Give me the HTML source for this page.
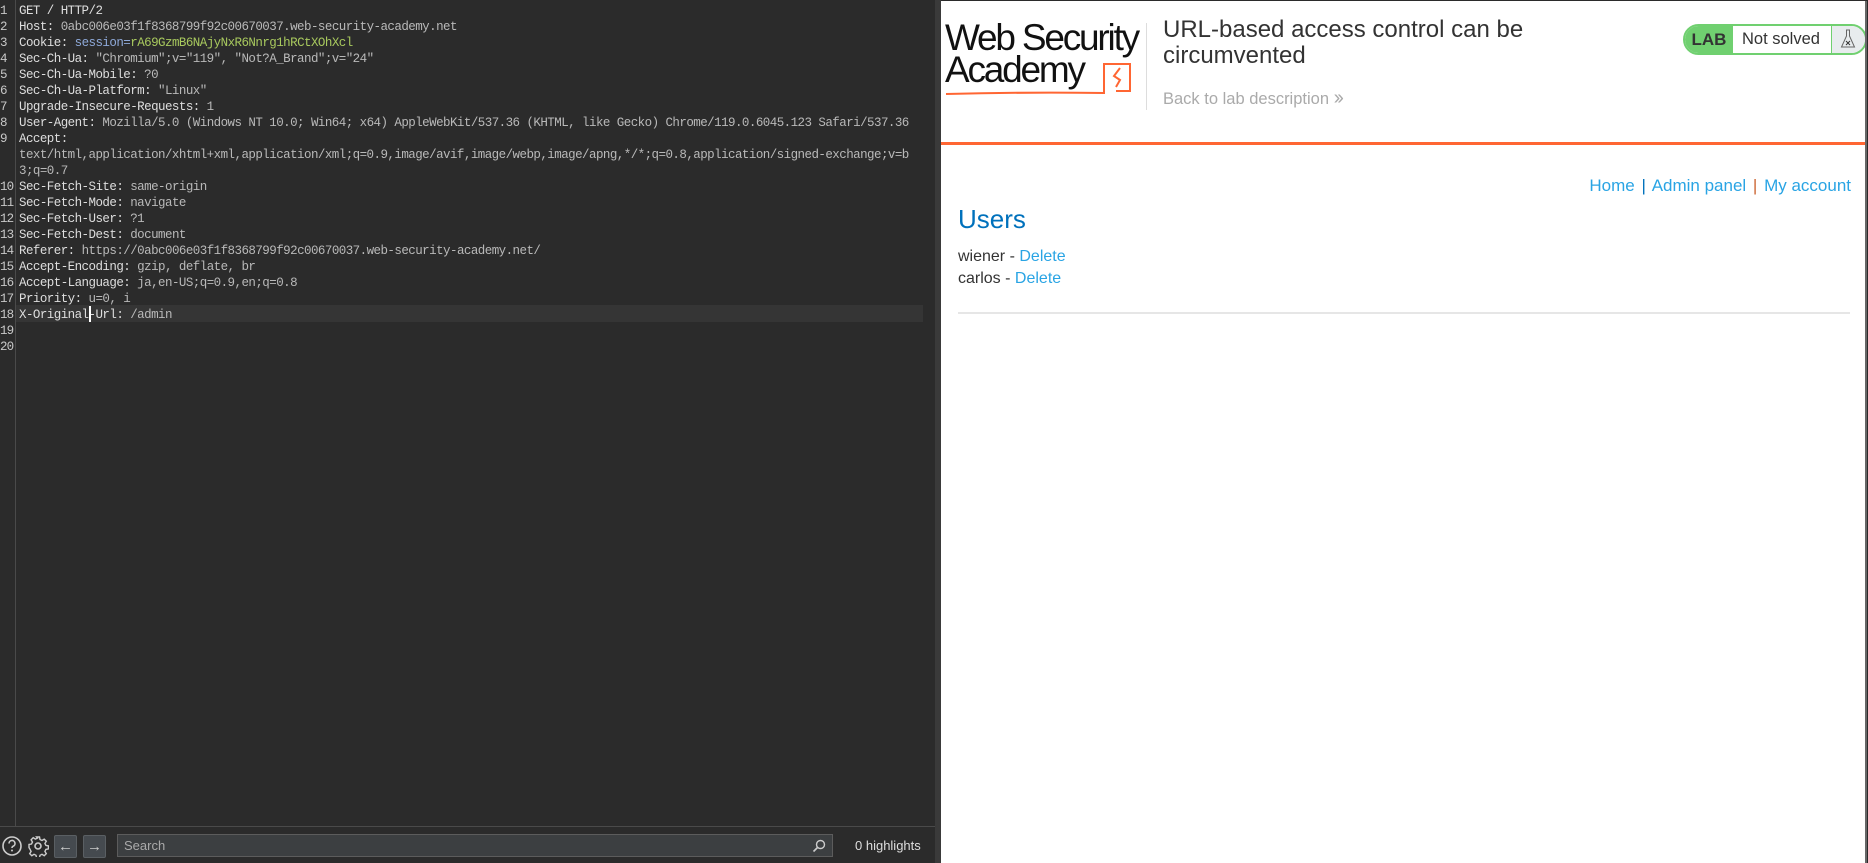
<!DOCTYPE html>
<html><head><meta charset="utf-8"><style>
*{margin:0;padding:0;box-sizing:border-box}
body{width:1868px;height:863px;overflow:hidden;background:#2b2b2b;position:relative;font-family:"Liberation Sans",sans-serif}
#ed{position:absolute;left:0;top:0;width:937px;height:863px;background:#2b2b2b}
#gut{position:absolute;left:15px;top:0;width:1px;height:826px;background:#4a4a4a}
.ln{position:absolute;left:0;width:15px;text-align:left;color:#c8c8c8;font:12.5px/16px "Liberation Mono",monospace;letter-spacing:-0.9px}
.tx{position:absolute;left:19px;color:#b9b9b9;font:12.5px/16px "Liberation Mono",monospace;letter-spacing:-0.55px;white-space:pre}
.k{color:#dedede}
.s{color:#8ea9d9}.g{color:#a8c95e}
#hl{position:absolute;left:16px;top:305px;width:907px;height:17px;background:#353535}
#bot{position:absolute;left:0;top:826px;width:937px;height:37px;border-top:1px solid #4a4a4a;background:#2b2b2b}
.btn{position:absolute;top:8px;width:23px;height:23px;background:#454a4f;border:1px solid #5a5f63;border-radius:2px;color:#ccc;font-size:15px;text-align:center;line-height:21px}
#search{position:absolute;left:117px;top:7px;width:716px;height:23px;background:#3c3f41;border:1px solid #5c5c5c;color:#aaa;font:13px/21px "Liberation Sans",sans-serif;padding-left:6px}
.a{color:#29a4e4;text-decoration:none}
</style></head><body>
<div id="ed">
<div id="gut"></div>
<div id="hl"></div>
<div class="ln" style="top:3px">1</div><div class="tx k" style="top:3px">GET / HTTP/2</div>
<div class="ln" style="top:19px">2</div><div class="tx" style="top:19px"><span class="k">Host:</span> 0abc006e03f1f8368799f92c00670037.web-security-academy.net</div>
<div class="ln" style="top:35px">3</div><div class="tx" style="top:35px"><span class="k">Cookie:</span> <span class="s">session=</span><span class="g">rA69GzmB6NAjyNxR6Nnrg1hRCtXOhXcl</span></div>
<div class="ln" style="top:51px">4</div><div class="tx" style="top:51px"><span class="k">Sec-Ch-Ua:</span> "Chromium";v="119", "Not?A_Brand";v="24"</div>
<div class="ln" style="top:67px">5</div><div class="tx" style="top:67px"><span class="k">Sec-Ch-Ua-Mobile:</span> ?0</div>
<div class="ln" style="top:83px">6</div><div class="tx" style="top:83px"><span class="k">Sec-Ch-Ua-Platform:</span> "Linux"</div>
<div class="ln" style="top:99px">7</div><div class="tx" style="top:99px"><span class="k">Upgrade-Insecure-Requests:</span> 1</div>
<div class="ln" style="top:115px">8</div><div class="tx" style="top:115px"><span class="k">User-Agent:</span> Mozilla/5.0 (Windows NT 10.0; Win64; x64) AppleWebKit/537.36 (KHTML, like Gecko) Chrome/119.0.6045.123 Safari/537.36</div>
<div class="ln" style="top:131px">9</div><div class="tx k" style="top:131px">Accept:</div>
<div class="tx" style="top:147px">text/html,application/xhtml+xml,application/xml;q=0.9,image/avif,image/webp,image/apng,*/*;q=0.8,application/signed-exchange;v=b</div>
<div class="tx" style="top:163px">3;q=0.7</div>
<div class="ln" style="top:179px">10</div><div class="tx" style="top:179px"><span class="k">Sec-Fetch-Site:</span> same-origin</div>
<div class="ln" style="top:195px">11</div><div class="tx" style="top:195px"><span class="k">Sec-Fetch-Mode:</span> navigate</div>
<div class="ln" style="top:211px">12</div><div class="tx" style="top:211px"><span class="k">Sec-Fetch-User:</span> ?1</div>
<div class="ln" style="top:227px">13</div><div class="tx" style="top:227px"><span class="k">Sec-Fetch-Dest:</span> document</div>
<div class="ln" style="top:243px">14</div><div class="tx" style="top:243px"><span class="k">Referer:</span> https://0abc006e03f1f8368799f92c00670037.web-security-academy.net/</div>
<div class="ln" style="top:259px">15</div><div class="tx" style="top:259px"><span class="k">Accept-Encoding:</span> gzip, deflate, br</div>
<div class="ln" style="top:275px">16</div><div class="tx" style="top:275px"><span class="k">Accept-Language:</span> ja,en-US;q=0.9,en;q=0.8</div>
<div class="ln" style="top:291px">17</div><div class="tx" style="top:291px"><span class="k">Priority:</span> u=0, i</div>
<div class="ln" style="top:307px">18</div><div class="tx" style="top:307px"><span class="k">X-Original-Url:</span> /admin</div>
<div style="position:absolute;left:89px;top:306px;width:2px;height:16px;background:#fff"></div>
<div class="ln" style="top:323px">19</div>
<div class="ln" style="top:339px">20</div>
<div id="bot">
<svg style="position:absolute;left:1px;top:8px" width="22" height="22" viewBox="0 0 22 22"><circle cx="11" cy="11" r="9" fill="none" stroke="#ccc" stroke-width="1.6"/><path d="M8 8.5a3 3 0 1 1 4 2.8c-.8.4-1 .9-1 1.7" fill="none" stroke="#ccc" stroke-width="1.6"/><circle cx="11" cy="15.5" r="1" fill="#ccc"/></svg>
<svg style="position:absolute;left:27px;top:8px" width="22" height="22" viewBox="0 0 22 22"><circle cx="11" cy="11" r="3" fill="none" stroke="#ccc" stroke-width="1.6"/><path d="M9.5 2h3l.5 2.5 2 1 2.2-1.4 2.1 2.1-1.4 2.2 1 2 2.5.5v3l-2.5.5-1 2 1.4 2.2-2.1 2.1-2.2-1.4-2 1-.5 2.5h-3l-.5-2.5-2-1-2.2 1.4-2.1-2.1 1.4-2.2-1-2L2 12.5v-3l2.5-.5 1-2-1.4-2.2 2.1-2.1 2.2 1.4 2-1z" fill="none" stroke="#ccc" stroke-width="1.4"/></svg>
<div class="btn" style="left:54px">&#8592;</div>
<div class="btn" style="left:83px">&#8594;</div>
<div id="search">Search
<svg style="position:absolute;right:6px;top:4px" width="14" height="14" viewBox="0 0 14 14"><circle cx="8.5" cy="5.5" r="4" fill="none" stroke="#ccc" stroke-width="1.4"/><path d="M5.5 8.5L1.5 12.5" stroke="#ccc" stroke-width="1.6"/></svg></div>
<div style="position:absolute;left:855px;top:8px;color:#ddd;font:13px/21px 'Liberation Sans',sans-serif">0 highlights</div>
</div>
</div>
<div style="position:absolute;left:935px;top:0;width:6px;height:863px;background:#3a3a3a"></div>
<div style="position:absolute;left:941px;top:1px;width:926px;height:862px;background:#fff">
  <div style="position:absolute;left:4px;top:21px;font-size:37px;line-height:32px;letter-spacing:-2.2px;color:#111;font-family:'Liberation Sans',sans-serif">Web Security<br>Academy</div>
  <svg style="position:absolute;left:3px;top:58px" width="200" height="40" viewBox="0 0 200 40"><path d="M2 35 Q80 33 160 34 L160 5 L186 5 L186 32 L172 32" fill="none" stroke="#ff6633" stroke-width="2"/><path d="M176 9 L170 17 L176 21 L172 28" fill="none" stroke="#ff6633" stroke-width="2"/></svg>
  <div style="position:absolute;left:205px;top:22px;width:1px;height:87px;background:#ddd"></div>
  <div style="position:absolute;left:222px;top:16px;font-size:24px;line-height:26px;color:#333">URL-based access control can be<br>circumvented</div>
  <div style="position:absolute;left:222px;top:86px;font-size:16.5px;color:#aaa">Back to lab description <span style="font-size:20px;letter-spacing:-3px">&#8250;&#8250;</span></div>
  <div style="position:absolute;left:742px;top:23px;width:184px;height:31px;border:2px solid #70d070;border-radius:16px;overflow:hidden;background:#fff">
    <div style="position:absolute;left:0;top:0;width:48px;height:27px;background:#70d070;color:#333;font-weight:bold;font-size:17px;line-height:27px;text-align:center">LAB</div>
    <div style="position:absolute;left:57px;top:0;font-size:16.5px;line-height:27px;color:#333">Not solved</div>
    <div style="position:absolute;left:146px;top:0;width:40px;height:27px;background:#e8ecee;border-left:1px solid #70d070">
      <svg style="position:absolute;left:8px;top:3px" width="16" height="20" viewBox="0 0 16 20"><path d="M6 1h4M6.5 1v6L1.5 18h13L9.5 7V1" fill="none" stroke="#666" stroke-width="1"/><path d="M6 12l4 4M10 12l-4 4" stroke="#333" stroke-width="1"/></svg>
    </div>
  </div>
  <div style="position:absolute;left:0;top:141px;width:926px;height:3px;background:#ff6633"></div>
  <div style="position:absolute;right:16px;top:175px;font-size:17px;color:#29a4e4">Home <span style="color:#0071bc;margin:0 2px">|</span> Admin panel <span style="color:#cc6633;margin:0 2px">|</span> My account</div>
  <div style="position:absolute;left:17px;top:203px;font-size:26px;color:#0071bc">Users</div>
  <div style="position:absolute;left:17px;top:245px;font-size:16px;line-height:22px;color:#333">wiener - <span class="a">Delete</span><br>carlos - <span class="a">Delete</span></div>
  <div style="position:absolute;left:17px;top:311px;width:892px;height:2px;background:#e6e6e6"></div>
  <div style="position:absolute;right:0;top:0;width:2px;height:862px;background:#666"></div>
</div>
</body></html>
